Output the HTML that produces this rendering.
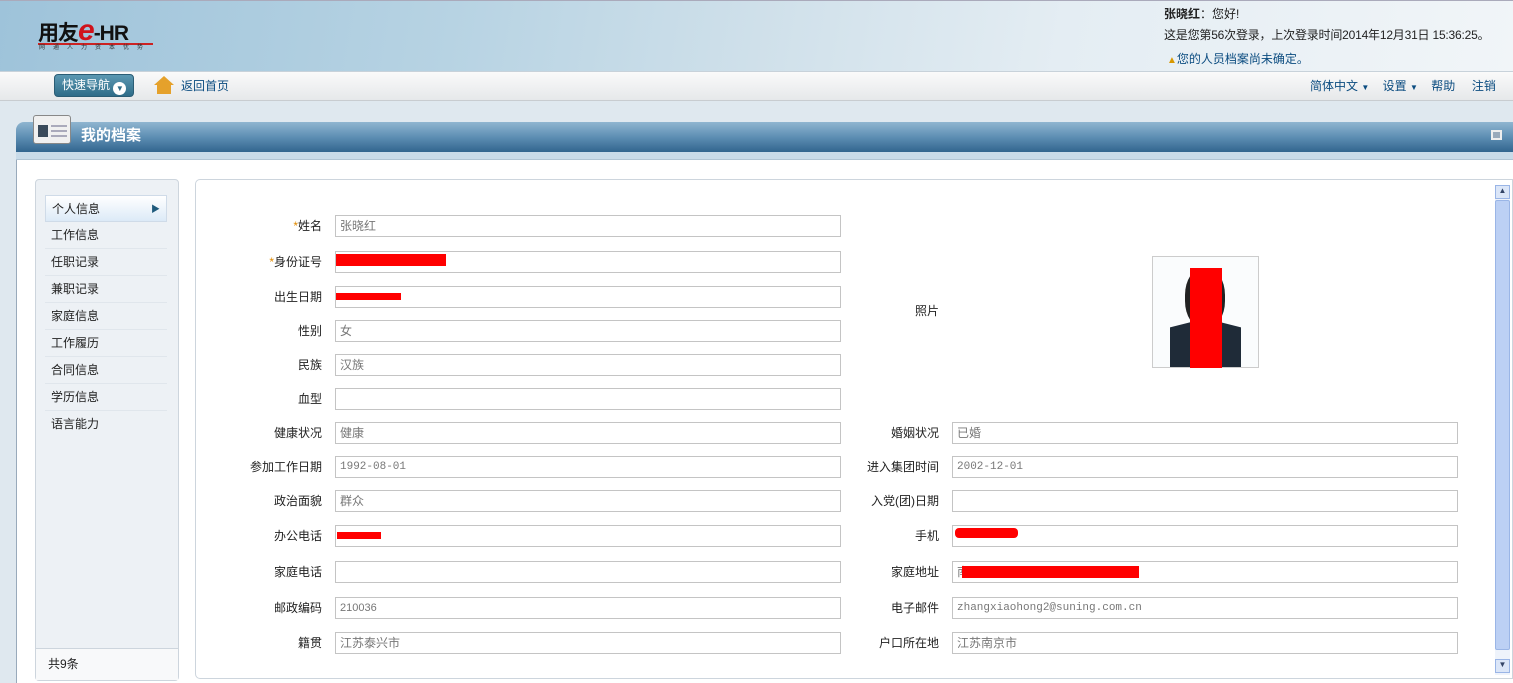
<!DOCTYPE html>
<html><head><meta charset="utf-8"><style>
*{margin:0;padding:0;box-sizing:border-box}
body{width:1513px;height:683px;overflow:hidden;background:#dfe8ef;font-family:"Liberation Sans","Noto Sans CJK SC",sans-serif;font-size:12px;color:#222;position:relative}
.a{position:absolute}
.top{left:0;top:0;width:1513px;height:71px;background:linear-gradient(100deg,#9ec3da 0%,#b7d3e3 30%,#cfe0ea 50%,#e4edf3 70%,#f1f5f8 100%);border-top:1px solid #aab}
.nav{left:0;top:71px;width:1513px;height:30px;background:linear-gradient(#fafafa,#e6e8ea);border-top:1px solid #c8d2da;border-bottom:1px solid #c8ccd0}
.lbl{text-align:right;width:150px;font-size:12px;line-height:22px}
.inp{height:22px;width:506px;border:1px solid #c4c4c4;background:#fff;font-size:12px;line-height:20px;padding-left:4px;color:#777}
.red{background:#f00}
.side div{height:27px;line-height:26px;padding-left:6px;border-bottom:1px solid #e0e6ec;font-size:12px;width:122px}
</style></head><body>
<div class="a top"></div>
<div class="a" style="left:38px;top:18px;height:26px;line-height:26px;font-size:21px;font-weight:bold;letter-spacing:-1px;color:#111;white-space:nowrap">用友<span style="color:#d0121b;font-style:italic;font-size:30px;line-height:26px">e</span>-HR</div>
<div class="a" style="left:38px;top:43px;width:115px;height:2px;background:#c22"></div>
<div class="a" style="left:39px;top:45px;font-size:6px;line-height:7px;color:#333;letter-spacing:8px;white-space:nowrap">网通人力资本优势</div>
<div class="a" style="left:1164px;top:7px;line-height:15px"><b>张晓红</b>：您好!</div>
<div class="a" style="left:1164px;top:28px;line-height:15px;letter-spacing:-0.2px">这是您第56次登录，上次登录时间2014年12月31日 15:36:25。</div>
<div class="a" style="left:1167px;top:52px;line-height:15px;color:#0b4c80"><span style="color:#d89800;font-size:10px">▲</span>您的人员档案尚未确定。</div>
<div class="a nav"></div>
<div class="a" style="left:54px;top:74px;width:80px;height:23px;border-radius:4px;background:linear-gradient(#5b98b2,#2f6c88);border:1px solid #2b5d75;color:#fff;line-height:21px;padding-left:7px">快速导航 <span style="display:inline-block;width:13px;height:13px;border-radius:50%;background:#fff;color:#2f6c88;font-size:8px;line-height:13px;text-align:center;vertical-align:-2px">▼</span></div>
<div class="a" style="left:154px;top:76px;width:20px;height:18px;background:#e5a12b;clip-path:polygon(50% 0,100% 50%,85% 50%,85% 100%,15% 100%,15% 50%,0 50%)"></div>
<div class="a" style="left:181px;top:77px;color:#0b4c80">返回首页</div>
<div class="a" style="left:1310px;top:77px;color:#0b4c80;white-space:nowrap">简体中文 <span style="font-size:8px">▼</span>&nbsp;&nbsp;&nbsp; 设置 <span style="font-size:8px">▼</span>&nbsp;&nbsp;&nbsp; 帮助&nbsp;&nbsp;&nbsp;&nbsp; 注销</div>
<div class="a" style="left:16px;top:122px;width:1497px;height:31px;border-radius:8px 0 0 0;background:linear-gradient(#8fb5d0,#5c8db2 50%,#2f628c);"></div>
<div class="a" style="left:16px;top:152px;width:1497px;height:8px;background:#c9dbe9;border-bottom:1px solid #b0c4d4"></div>
<div class="a" style="left:33px;top:115px;width:38px;height:29px;background:#f0f0f0;border:1px solid #888;border-radius:3px"><div class="a" style="left:4px;top:9px;width:10px;height:12px;background:#3a4a5a"></div><div class="a" style="left:17px;top:9px;width:16px;height:2px;background:#aab"></div><div class="a" style="left:17px;top:14px;width:16px;height:2px;background:#aab"></div><div class="a" style="left:17px;top:19px;width:16px;height:2px;background:#aab"></div></div>
<div class="a" style="left:81px;top:126px;color:#fff;font-size:15px;font-weight:bold;line-height:20px">我的档案</div>
<div class="a" style="left:1491px;top:130px;width:11px;height:10px;border:2px solid #eee;background:#9ab"></div>
<div class="a" style="left:16px;top:160px;width:1497px;height:523px;background:#fff;border-left:1px solid #9ab"></div>
<div class="a" style="left:35px;top:179px;width:144px;height:502px;background:#edf1f5;border:1px solid #cdd5dd;border-radius:4px"></div>
<div class="a side" style="left:45px;top:195px">
<div style="background:linear-gradient(#fff,#dceaf7);border:1px solid #cfdbe8;position:relative">个人信息<span style="position:absolute;right:6px;color:#1e5a7c;font-size:9px">▶</span></div>
<div>工作信息</div><div>任职记录</div><div>兼职记录</div><div>家庭信息</div><div>工作履历</div><div>合同信息</div><div>学历信息</div><div style="border:0">语言能力</div></div>
<div class="a" style="left:36px;top:648px;width:142px;height:32px;background:#f8f9fa;border-top:1px solid #cdd5dd;padding:6px 0 0 12px">共9条</div>
<div class="a" style="left:195px;top:179px;width:1318px;height:500px;border:1px solid #cdd5dd;border-radius:5px 0 0 5px;background:#fff"></div>
<div class="a" style="left:1495px;top:185px;width:15px;height:490px;background:#eef3fb"></div>
<div class="a" style="left:1495px;top:200px;width:15px;height:450px;background:#bcd0f4;border:1px solid #9ab5e6;border-radius:2px"></div>
<div class="a" style="left:1495px;top:185px;width:15px;height:14px;background:#dbe6f8;border:1px solid #9ab5e6;font-size:8px;text-align:center;color:#346">▲</div>
<div class="a" style="left:1495px;top:659px;width:15px;height:14px;background:#dbe6f8;border:1px solid #9ab5e6;font-size:8px;text-align:center;color:#346">▼</div>

<div class="a lbl" style="left:172px;top:215px"><span style="color:#e08a00">*</span>姓名</div><div class="a inp" style="left:335px;top:215px">张晓红</div>
<div class="a lbl" style="left:172px;top:251px"><span style="color:#e08a00">*</span>身份证号</div><div class="a inp" style="left:335px;top:251px"></div>
<div class="a lbl" style="left:172px;top:286px">出生日期</div><div class="a inp" style="left:335px;top:286px"></div>
<div class="a lbl" style="left:172px;top:320px">性别</div><div class="a inp" style="left:335px;top:320px">女</div>
<div class="a lbl" style="left:172px;top:354px">民族</div><div class="a inp" style="left:335px;top:354px">汉族</div>
<div class="a lbl" style="left:172px;top:388px">血型</div><div class="a inp" style="left:335px;top:388px"></div>
<div class="a lbl" style="left:172px;top:422px">健康状况</div><div class="a inp" style="left:335px;top:422px">健康</div>
<div class="a lbl" style="left:172px;top:456px">参加工作日期</div><div class="a inp" style="left:335px;top:456px;font-family:'Liberation Mono',monospace;font-size:11px">1992-08-01</div>
<div class="a lbl" style="left:172px;top:490px">政治面貌</div><div class="a inp" style="left:335px;top:490px">群众</div>
<div class="a lbl" style="left:172px;top:525px">办公电话</div><div class="a inp" style="left:335px;top:525px"></div>
<div class="a lbl" style="left:172px;top:561px">家庭电话</div><div class="a inp" style="left:335px;top:561px"></div>
<div class="a lbl" style="left:172px;top:597px">邮政编码</div><div class="a inp" style="left:335px;top:597px;font-size:11px">210036</div>
<div class="a lbl" style="left:172px;top:632px">籍贯</div><div class="a inp" style="left:335px;top:632px">江苏泰兴市</div>

<div class="a lbl" style="left:789px;top:300px">照片</div>
<div class="a" style="left:1152px;top:256px;width:107px;height:112px;border:1px solid #ccc;background:#fafcfd"></div>
<div class="a" style="left:1170px;top:322px;width:71px;height:45px;background:#1f2b38;clip-path:polygon(0 12%,30% 0,70% 0,100% 12%,100% 100%,0 100%)"></div>
<div class="a" style="left:1185px;top:268px;width:40px;height:60px;background:#222;border-radius:45%"></div>
<div class="a red" style="left:1190px;top:268px;width:32px;height:100px"></div>

<div class="a lbl" style="left:789px;top:422px">婚姻状况</div><div class="a inp" style="left:952px;top:422px">已婚</div>
<div class="a lbl" style="left:789px;top:456px">进入集团时间</div><div class="a inp" style="left:952px;top:456px;font-family:'Liberation Mono',monospace;font-size:11px">2002-12-01</div>
<div class="a lbl" style="left:789px;top:490px">入党(团)日期</div><div class="a inp" style="left:952px;top:490px"></div>
<div class="a lbl" style="left:789px;top:525px">手机</div><div class="a inp" style="left:952px;top:525px"></div>
<div class="a lbl" style="left:789px;top:561px">家庭地址</div><div class="a inp" style="left:952px;top:561px">南</div>
<div class="a lbl" style="left:789px;top:597px">电子邮件</div><div class="a inp" style="left:952px;top:597px;font-family:'Liberation Mono',monospace;font-size:11px">zhangxiaohong2@suning.com.cn</div>
<div class="a lbl" style="left:789px;top:632px">户口所在地</div><div class="a inp" style="left:952px;top:632px">江苏南京市</div>

<div class="a red" style="left:336px;top:254px;width:110px;height:12px"></div>
<div class="a red" style="left:336px;top:293px;width:65px;height:7px"></div>
<div class="a red" style="left:337px;top:532px;width:44px;height:7px"></div>
<div class="a red" style="left:955px;top:528px;width:63px;height:10px;border-radius:4px"></div>
<div class="a red" style="left:962px;top:566px;width:177px;height:12px"></div>
</body></html>
